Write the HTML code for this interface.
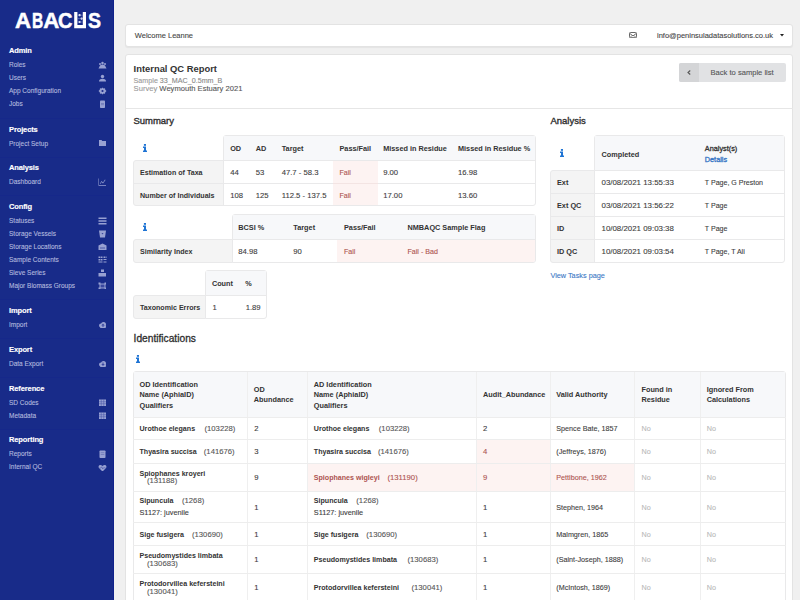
<!DOCTYPE html>
<html><head><meta charset="utf-8">
<style>
*{box-sizing:border-box;margin:0;padding:0}
html,body{width:800px;height:600px;overflow:hidden;background:#f0f0f0;font-family:"Liberation Sans",sans-serif;color:#333}
.a{position:absolute;white-space:nowrap}
.n{-webkit-text-stroke:0.1px}
.b{-webkit-text-stroke:0px}
</style></head><body>
<div class="a" style="left:0px;top:0px;width:114px;height:600px;background:#182b89;"></div>
<div class="a" style="left:113px;top:0px;width:1px;height:600px;background:#10218a;"></div>
<div class="a" style="left:15.0px;top:9.6px;font-size:22.2px;line-height:22px;font-weight:bold;color:#fff;-webkit-text-stroke:0.5px #fff;transform:scaleX(1.0);transform-origin:0 0">A</div>
<div class="a" style="left:31.8px;top:9.6px;font-size:22.2px;line-height:22px;font-weight:bold;color:#fff;-webkit-text-stroke:0.5px #fff;transform:scaleX(0.7);transform-origin:0 0">B</div>
<div class="a" style="left:43.2px;top:9.6px;font-size:22.2px;line-height:22px;font-weight:bold;color:#fff;-webkit-text-stroke:0.5px #fff;transform:scaleX(1.0);transform-origin:0 0">A</div>
<div class="a" style="left:58.4px;top:9.6px;font-size:22.2px;line-height:22px;font-weight:bold;color:#fff;-webkit-text-stroke:0.5px #fff;transform:scaleX(0.9);transform-origin:0 0">C</div>
<div class="a" style="left:87.5px;top:9.6px;font-size:22.2px;line-height:22px;font-weight:bold;color:#fff;-webkit-text-stroke:0.5px #fff;transform:scaleX(0.88);transform-origin:0 0">S</div>
<svg class="a" style="left:74px;top:12px" width="13" height="17" viewBox="0 0 13 17"><path d="M0.2 0 H3.4 V13 H8.8 V0 H12 V16.2 H0.2 Z" fill="#fff"/><circle cx="5.6" cy="3.2" r="1.1" fill="#fff"/><circle cx="7.6" cy="6.6" r="1.1" fill="#fff"/><circle cx="5.6" cy="10" r="1.1" fill="#fff"/><path d="M3.4 3.2 H8.8 M3.4 6.6 H8.8 M3.4 10 H8.8" stroke="#8f9ad0" stroke-width="0.5"/></svg>
<div class="a b" style="left:9px;top:46px;font-size:7.5px;line-height:9px;font-weight:bold;color:#fff;letter-spacing:-0.12px;-webkit-text-stroke:0.15px #fff">Admin</div>
<div class="a b" style="left:9px;top:125px;font-size:7.5px;line-height:9px;font-weight:bold;color:#fff;letter-spacing:-0.12px;-webkit-text-stroke:0.15px #fff">Projects</div>
<div class="a b" style="left:9px;top:163px;font-size:7.5px;line-height:9px;font-weight:bold;color:#fff;letter-spacing:-0.12px;-webkit-text-stroke:0.15px #fff">Analysis</div>
<div class="a b" style="left:9px;top:202px;font-size:7.5px;line-height:9px;font-weight:bold;color:#fff;letter-spacing:-0.12px;-webkit-text-stroke:0.15px #fff">Config</div>
<div class="a b" style="left:9px;top:306px;font-size:7.5px;line-height:9px;font-weight:bold;color:#fff;letter-spacing:-0.12px;-webkit-text-stroke:0.15px #fff">Import</div>
<div class="a b" style="left:9px;top:345px;font-size:7.5px;line-height:9px;font-weight:bold;color:#fff;letter-spacing:-0.12px;-webkit-text-stroke:0.15px #fff">Export</div>
<div class="a b" style="left:9px;top:384px;font-size:7.5px;line-height:9px;font-weight:bold;color:#fff;letter-spacing:-0.12px;-webkit-text-stroke:0.15px #fff">Reference</div>
<div class="a b" style="left:9px;top:435px;font-size:7.5px;line-height:9px;font-weight:bold;color:#fff;letter-spacing:-0.12px;-webkit-text-stroke:0.15px #fff">Reporting</div>
<div class="a n" style="left:9px;top:61px;font-size:6.5px;line-height:7px;font-weight:normal;color:#b3badf;">Roles</div>
<div class="a n" style="left:9px;top:74px;font-size:6.5px;line-height:7px;font-weight:normal;color:#b3badf;">Users</div>
<div class="a n" style="left:9px;top:87px;font-size:6.5px;line-height:7px;font-weight:normal;color:#b3badf;">App Configuration</div>
<div class="a n" style="left:9px;top:100px;font-size:6.5px;line-height:7px;font-weight:normal;color:#b3badf;">Jobs</div>
<div class="a n" style="left:9px;top:140px;font-size:6.5px;line-height:7px;font-weight:normal;color:#b3badf;">Project Setup</div>
<div class="a n" style="left:9px;top:178px;font-size:6.5px;line-height:7px;font-weight:normal;color:#b3badf;">Dashboard</div>
<div class="a n" style="left:9px;top:217px;font-size:6.5px;line-height:7px;font-weight:normal;color:#b3badf;">Statuses</div>
<div class="a n" style="left:9px;top:230px;font-size:6.5px;line-height:7px;font-weight:normal;color:#b3badf;">Storage Vessels</div>
<div class="a n" style="left:9px;top:243px;font-size:6.5px;line-height:7px;font-weight:normal;color:#b3badf;">Storage Locations</div>
<div class="a n" style="left:9px;top:256px;font-size:6.5px;line-height:7px;font-weight:normal;color:#b3badf;">Sample Contents</div>
<div class="a n" style="left:9px;top:269px;font-size:6.5px;line-height:7px;font-weight:normal;color:#b3badf;">Sieve Series</div>
<div class="a n" style="left:9px;top:282px;font-size:6.5px;line-height:7px;font-weight:normal;color:#b3badf;">Major Biomass Groups</div>
<div class="a n" style="left:9px;top:321px;font-size:6.5px;line-height:7px;font-weight:normal;color:#b3badf;">Import</div>
<div class="a n" style="left:9px;top:360px;font-size:6.5px;line-height:7px;font-weight:normal;color:#b3badf;">Data Export</div>
<div class="a n" style="left:9px;top:399px;font-size:6.5px;line-height:7px;font-weight:normal;color:#b3badf;">SD Codes</div>
<div class="a n" style="left:9px;top:412px;font-size:6.5px;line-height:7px;font-weight:normal;color:#b3badf;">Metadata</div>
<div class="a n" style="left:9px;top:450px;font-size:6.5px;line-height:7px;font-weight:normal;color:#b3badf;">Reports</div>
<div class="a n" style="left:9px;top:463px;font-size:6.5px;line-height:7px;font-weight:normal;color:#b3badf;">Internal QC</div>
<div class="a" style="left:0px;top:118px;width:113px;height:1px;background:#16288a;"></div>
<div class="a" style="left:0px;top:157px;width:113px;height:1px;background:#16288a;"></div>
<div class="a" style="left:0px;top:195px;width:113px;height:1px;background:#16288a;"></div>
<div class="a" style="left:0px;top:299px;width:113px;height:1px;background:#16288a;"></div>
<div class="a" style="left:0px;top:338px;width:113px;height:1px;background:#16288a;"></div>
<div class="a" style="left:0px;top:377px;width:113px;height:1px;background:#16288a;"></div>
<div class="a" style="left:0px;top:429px;width:113px;height:1px;background:#16288a;"></div>
<svg class="a" style="left:97.5px;top:60.8px" width="9" height="8" viewBox="0 0 18 16" fill="#98a1d2"><circle cx="9" cy="4" r="2.5"/><circle cx="4" cy="6" r="2"/><circle cx="14" cy="6" r="2"/><path d="M4 9 Q9 5 14 9 L17 15 H1 Z"/></svg>
<svg class="a" style="left:97.5px;top:73.5px" width="9" height="8" viewBox="0 0 18 16" fill="#98a1d2"><circle cx="9" cy="5" r="3.4"/><path d="M2 15 Q2 9.5 9 9.5 Q16 9.5 16 15 Z"/></svg>
<svg class="a" style="left:97.5px;top:86.5px" width="9" height="8" viewBox="0 0 18 16" fill="#98a1d2"><path d="M9 1 L11 3 L14 2.5 L14.5 5.5 L17 8 L14.5 10.5 L14 13.5 L11 13 L9 15 L7 13 L4 13.5 L3.5 10.5 L1 8 L3.5 5.5 L4 2.5 L7 3 Z"/><circle cx="9" cy="8" r="2.2" fill="#1b2a8a"/></svg>
<svg class="a" style="left:97.5px;top:99.6px" width="9" height="8" viewBox="0 0 18 16" fill="#98a1d2"><rect x="4" y="1" width="10" height="15" rx="1.5"/><rect x="6" y="6" width="6" height="1.2" fill="#5f6cb0"/><rect x="6" y="9" width="6" height="1.2" fill="#5f6cb0"/></svg>
<svg class="a" style="left:97.5px;top:138.5px" width="9" height="8" viewBox="0 0 18 16" fill="#98a1d2"><path d="M2 2 H7 L8.5 4 H16 V14 H2 Z"/></svg>
<svg class="a" style="left:97.5px;top:177.5px" width="9" height="8" viewBox="0 0 18 16" fill="#98a1d2"><path d="M2 1 V14 H16 V15.5 H1 V1 Z"/><path d="M4 11 L7 6 L10 9 L14 3 L15 4 L10 11 L7 8 L5 12 Z"/></svg>
<svg class="a" style="left:97.5px;top:216.5px" width="9" height="8" viewBox="0 0 18 16" fill="#98a1d2"><rect x="1" y="1" width="16" height="3"/><rect x="1" y="6.5" width="16" height="3"/><rect x="1" y="12" width="16" height="3"/></svg>
<svg class="a" style="left:97.5px;top:229.5px" width="9" height="8" viewBox="0 0 18 16" fill="#98a1d2"><path d="M2 1 H16 L14 15 H4 Z"/><path d="M7 6 H11 L9 9 Z" fill="#3a48a0"/></svg>
<svg class="a" style="left:97.5px;top:243.0px" width="9" height="7" viewBox="0 0 18 14" fill="#98a1d2"><path d="M1 5 L9 1 L17 5 V15 H1 Z"/><rect x="4" y="8" width="10" height="1" fill="#4b58a8"/><rect x="4" y="11" width="10" height="1" fill="#4b58a8"/></svg>
<svg class="a" style="left:97.5px;top:256.0px" width="9" height="7" viewBox="0 0 18 14" fill="#98a1d2"><rect x="1" y="1" width="3" height="3"/><rect x="5" y="1" width="4" height="3"/><rect x="11" y="1" width="3" height="3"/><rect x="15" y="1" width="2" height="3"/><rect x="1" y="6" width="3" height="3"/><rect x="5" y="6" width="4" height="3"/><rect x="11" y="6" width="6" height="2"/><rect x="1" y="11" width="8" height="2"/><rect x="11" y="11" width="6" height="2"/></svg>
<svg class="a" style="left:98.0px;top:268.5px" width="8" height="8" viewBox="0 0 16 16" fill="#98a1d2"><rect x="6" y="1" width="6" height="5"/><rect x="1" y="8" width="16" height="7"/></svg>
<svg class="a" style="left:98.0px;top:282.0px" width="8" height="7" viewBox="0 0 16 14" fill="#98a1d2"><path d="M1 1 H5 V3 H13 V1 H17 V5 H15 V11 H17 V15 H13 V13 H5 V15 H1 V11 H3 V5 H1 Z"/><path d="M5 5 H13 V11 H5 Z" fill="#3a48a0"/></svg>
<svg class="a" style="left:97.5px;top:321.2px" width="9" height="7" viewBox="0 0 18 14" fill="#98a1d2"><circle cx="6" cy="9" r="4"/><circle cx="11" cy="7" r="5"/><rect x="4" y="9" width="12" height="5" rx="2"/><path d="M10 5 L6.5 9 H9 V12 H11 V9 H13.5 Z" fill="#3a48a0"/></svg>
<svg class="a" style="left:97.5px;top:359.5px" width="9" height="7" viewBox="0 0 18 14" fill="#98a1d2"><circle cx="6" cy="9" r="4"/><circle cx="11" cy="7" r="5"/><rect x="4" y="9" width="12" height="5" rx="2"/><path d="M10 12 L6.5 8 H9 V5 H11 V8 H13.5 Z" fill="#3a48a0"/></svg>
<svg class="a" style="left:98.0px;top:398.7px" width="8" height="7" viewBox="0 0 16 14" fill="#98a1d2"><rect x="2" y="1" width="14" height="14"/><path d="M2 5.5 H16 M2 9.5 H16 M6.5 1 V15 M11.5 1 V15" stroke="#3a48a0" stroke-width="0.9"/></svg>
<svg class="a" style="left:98.0px;top:411.7px" width="8" height="7" viewBox="0 0 16 14" fill="#98a1d2"><rect x="2" y="1" width="14" height="14"/><path d="M2 5.5 H16 M2 9.5 H16 M6.5 1 V15 M11.5 1 V15" stroke="#3a48a0" stroke-width="0.9"/></svg>
<svg class="a" style="left:98.0px;top:450.0px" width="8" height="8" viewBox="0 0 16 16" fill="#98a1d2"><rect x="3" y="1" width="12" height="15" rx="1.5"/><rect x="5.5" y="5" width="7" height="1.2" fill="#5f6cb0"/><rect x="5.5" y="8.5" width="7" height="1.2" fill="#5f6cb0"/></svg>
<svg class="a" style="left:97.5px;top:463.5px" width="9" height="7" viewBox="0 0 18 14" fill="#98a1d2"><path d="M9 15 L2 8 Q0 5 2.5 2.5 Q5.5 0.5 9 4 Q12.5 0.5 15.5 2.5 Q18 5 16 8 Z"/><path d="M3 8 H6 L7.5 5.5 L9.5 10 L11 7.5 H15" stroke="#3a48a0" stroke-width="1" fill="none"/></svg>
<div class="a" style="left:125px;top:24px;width:668px;height:23px;background:#fff;border:1px solid #e3e3e3;border-radius:3px;box-shadow:0 1px 1px rgba(0,0,0,0.05)"></div>
<svg class="a" style="left:629px;top:32px" width="8" height="6.2" viewBox="0 0 16 12.4"><rect x="1" y="1" width="14" height="10.4" rx="1.8" fill="none" stroke="#666" stroke-width="2"/><path d="M1.5 2.8 L8 8 L14.5 2.8" fill="none" stroke="#666" stroke-width="2"/><path d="M2 11 L6 7 M14 11 L10 7" stroke="#666" stroke-width="1.6"/></svg>
<svg class="a" style="left:779.5px;top:33.5px" width="4" height="3" viewBox="0 0 8 6"><path d="M0 0 H8 L4 5 Z" fill="#222"/></svg>
<div class="a n" style="left:134.8px;top:31px;font-size:7.5px;line-height:9px;font-weight:normal;color:#444;">Welcome Leanne</div>
<div class="a n" style="left:657px;top:31px;font-size:7.5px;line-height:9px;font-weight:normal;color:#444;">info@peninsuladatasolutions.co.uk</div>
<div class="a" style="left:125px;top:54px;width:668px;height:567px;background:#fff;border:1px solid #e3e3e3;border-radius:3px;"></div>
<div class="a b" style="left:133.6px;top:63px;font-size:9.4px;line-height:11px;font-weight:bold;color:#333;">Internal QC Report</div>
<div class="a n" style="left:133.6px;top:77px;font-size:7.16px;line-height:8px;font-weight:normal;color:#888;"><span style="color:#999">Sample</span> <span style="color:#888">33_MAC_0.5mm_B</span></div>
<div class="a n" style="left:133.6px;top:84px;font-size:7.6px;line-height:9px;font-weight:normal;color:#555;"><span style="color:#999">Survey</span> <span style="color:#555">Weymouth Estuary 2021</span></div>
<div class="a" style="left:679px;top:63px;width:107px;height:19px;background:#e1e2e4;border-radius:2px;"></div>
<div class="a" style="left:679px;top:63px;width:20px;height:19px;background:#d4d5d7;border-radius:2px 0 0 2px;"></div>
<svg class="a" style="left:687px;top:70px" width="4" height="5" viewBox="0 0 8 10"><path d="M6.5 1 L2 5 L6.5 9" fill="none" stroke="#555" stroke-width="2.2"/></svg>
<div class="a n" style="left:710.5px;top:68px;font-size:7.59px;line-height:9px;font-weight:normal;color:#555;">Back to sample list</div>
<div class="a" style="left:126px;top:108px;width:667px;height:1px;background:#e6e6e6;"></div>
<div class="a n" style="left:133.4px;top:115px;font-size:9.5px;line-height:11px;font-weight:normal;color:#2e2e2e;-webkit-text-stroke:0.35px">Summary</div>
<div class="a n" style="left:550.4px;top:115px;font-size:9.5px;line-height:11px;font-weight:normal;color:#2e2e2e;-webkit-text-stroke:0.35px">Analysis</div>
<div class="a" style="left:133px;top:160px;width:91px;height:46px;background:#f4f4f4;border:1px solid #e9e9ea;border-radius:3px 0 0 3px;"></div>
<div class="a" style="left:223px;top:135px;width:313px;height:71px;background:#fff;border:1px solid #e9e9ea;border-radius:3px 3px 3px 0;"></div>
<div class="a" style="left:224px;top:136px;width:311px;height:25px;background:#f7f8fa;border-radius:0;"></div>
<div class="a" style="left:223px;top:160px;width:313px;height:1px;background:#e9e9ea;"></div>
<div class="a" style="left:133px;top:183px;width:403px;height:1px;background:#e9e9ea;"></div>
<div class="a" style="left:223px;top:160px;width:1px;height:46px;background:#e9e9ea;"></div>
<div class="a" style="left:333px;top:161px;width:45px;height:44px;background:#fdf3f2;border-radius:0;"></div>
<div class="a" style="left:333px;top:183px;width:45px;height:1px;background:#f3e4e3;"></div>
<svg class="a" style="left:142.5px;top:143.8px" width="4" height="8" viewBox="0 0 4 8"><rect x="0.9" y="0" width="2.1" height="1.8" fill="#1f74d4"/><path d="M0 2.6 H3 V6.6 H4 V8 H0 V6.6 H1 V4 H0 Z" fill="#1f74d4"/></svg>
<div class="a b" style="left:230.2px;top:144px;font-size:7.3px;line-height:9px;font-weight:bold;color:#333;">OD</div>
<div class="a b" style="left:255.8px;top:144px;font-size:7.3px;line-height:9px;font-weight:bold;color:#333;">AD</div>
<div class="a b" style="left:281.7px;top:144px;font-size:7.3px;line-height:9px;font-weight:bold;color:#333;">Target</div>
<div class="a b" style="left:339.5px;top:144px;font-size:7.3px;line-height:9px;font-weight:bold;color:#333;">Pass/Fail</div>
<div class="a b" style="left:383.2px;top:144px;font-size:7.3px;line-height:9px;font-weight:bold;color:#333;">Missed in Residue</div>
<div class="a b" style="left:458px;top:144px;font-size:7.3px;line-height:9px;font-weight:bold;color:#333;">Missed in Residue %</div>
<div class="a b" style="left:140px;top:169px;font-size:7.1px;line-height:8px;font-weight:bold;color:#333;">Estimation of Taxa</div>
<div class="a b" style="left:140px;top:192px;font-size:7.1px;line-height:8px;font-weight:bold;color:#333;">Number of Individuals</div>
<div class="a n" style="left:230.2px;top:168px;font-size:7.7px;line-height:9px;font-weight:normal;color:#3d3d3d;">44</div>
<div class="a n" style="left:255.8px;top:168px;font-size:7.7px;line-height:9px;font-weight:normal;color:#3d3d3d;">53</div>
<div class="a n" style="left:281.7px;top:168px;font-size:7.7px;line-height:9px;font-weight:normal;color:#3d3d3d;">47.7 - 58.3</div>
<div class="a n" style="left:339.5px;top:169px;font-size:7.1px;line-height:8px;font-weight:normal;color:#ad5450;">Fail</div>
<div class="a n" style="left:383.2px;top:168px;font-size:7.7px;line-height:9px;font-weight:normal;color:#3d3d3d;">9.00</div>
<div class="a n" style="left:458px;top:168px;font-size:7.7px;line-height:9px;font-weight:normal;color:#3d3d3d;">16.98</div>
<div class="a n" style="left:230.2px;top:191px;font-size:7.7px;line-height:9px;font-weight:normal;color:#3d3d3d;">108</div>
<div class="a n" style="left:255.8px;top:191px;font-size:7.7px;line-height:9px;font-weight:normal;color:#3d3d3d;">125</div>
<div class="a n" style="left:281.7px;top:191px;font-size:7.7px;line-height:9px;font-weight:normal;color:#3d3d3d;">112.5 - 137.5</div>
<div class="a n" style="left:339.5px;top:192px;font-size:7.1px;line-height:8px;font-weight:normal;color:#ad5450;">Fail</div>
<div class="a n" style="left:383.2px;top:191px;font-size:7.7px;line-height:9px;font-weight:normal;color:#3d3d3d;">17.00</div>
<div class="a n" style="left:458px;top:191px;font-size:7.7px;line-height:9px;font-weight:normal;color:#3d3d3d;">13.60</div>
<div class="a" style="left:133px;top:239px;width:100px;height:24px;background:#f4f4f4;border:1px solid #e9e9ea;border-radius:3px 0 0 3px;"></div>
<div class="a" style="left:232px;top:214px;width:304px;height:49px;background:#fff;border:1px solid #e9e9ea;border-radius:3px 3px 3px 0;"></div>
<div class="a" style="left:233px;top:215px;width:302px;height:25px;background:#f7f8fa;border-radius:0;"></div>
<div class="a" style="left:232px;top:239px;width:304px;height:1px;background:#e9e9ea;"></div>
<div class="a" style="left:337px;top:240px;width:198px;height:22px;background:#fdf3f2;border-radius:0 0 2px 0;"></div>
<svg class="a" style="left:142.5px;top:223.2px" width="4" height="8" viewBox="0 0 4 8"><rect x="0.9" y="0" width="2.1" height="1.8" fill="#1f74d4"/><path d="M0 2.6 H3 V6.6 H4 V8 H0 V6.6 H1 V4 H0 Z" fill="#1f74d4"/></svg>
<div class="a b" style="left:238.3px;top:223px;font-size:7.3px;line-height:9px;font-weight:bold;color:#333;">BCSI %</div>
<div class="a b" style="left:293.3px;top:223px;font-size:7.3px;line-height:9px;font-weight:bold;color:#333;">Target</div>
<div class="a b" style="left:344px;top:223px;font-size:7.3px;line-height:9px;font-weight:bold;color:#333;">Pass/Fail</div>
<div class="a b" style="left:407.5px;top:223px;font-size:7.3px;line-height:9px;font-weight:bold;color:#333;">NMBAQC Sample Flag</div>
<div class="a b" style="left:140px;top:248px;font-size:7.1px;line-height:8px;font-weight:bold;color:#333;">Similarity Index</div>
<div class="a n" style="left:238.3px;top:247px;font-size:7.7px;line-height:9px;font-weight:normal;color:#3d3d3d;">84.98</div>
<div class="a n" style="left:293.3px;top:247px;font-size:7.7px;line-height:9px;font-weight:normal;color:#3d3d3d;">90</div>
<div class="a n" style="left:344px;top:248px;font-size:7.1px;line-height:8px;font-weight:normal;color:#ad5450;">Fail</div>
<div class="a n" style="left:407.5px;top:248px;font-size:7.1px;line-height:8px;font-weight:normal;color:#ad5450;">Fail - Bad</div>
<div class="a" style="left:133px;top:295px;width:73px;height:24px;background:#f4f4f4;border:1px solid #e9e9ea;border-radius:3px 0 0 3px;"></div>
<div class="a" style="left:205px;top:270px;width:62px;height:49px;background:#fff;border:1px solid #e9e9ea;border-radius:3px 3px 3px 0;"></div>
<div class="a" style="left:206px;top:271px;width:60px;height:24px;background:#f7f8fa;border-radius:0;"></div>
<div class="a" style="left:205px;top:295px;width:62px;height:1px;background:#e9e9ea;"></div>
<div class="a b" style="left:211.9px;top:279px;font-size:7.3px;line-height:9px;font-weight:bold;color:#333;">Count</div>
<div class="a b" style="left:245.2px;top:279px;font-size:7.3px;line-height:9px;font-weight:bold;color:#333;">%</div>
<div class="a b" style="left:140px;top:304px;font-size:7.1px;line-height:8px;font-weight:bold;color:#333;">Taxonomic Errors</div>
<div class="a n" style="left:212.5px;top:303px;font-size:7.7px;line-height:9px;font-weight:normal;color:#3d3d3d;">1</div>
<div class="a n" style="left:245.7px;top:303px;font-size:7.7px;line-height:9px;font-weight:normal;color:#3d3d3d;">1.89</div>
<div class="a" style="left:550px;top:170px;width:45px;height:93px;background:#f4f4f4;border:1px solid #e9e9ea;border-radius:3px 0 0 3px;"></div>
<div class="a" style="left:594px;top:135px;width:191px;height:128px;background:#fff;border:1px solid #e9e9ea;border-radius:3px 3px 3px 0;"></div>
<div class="a" style="left:595px;top:136px;width:189px;height:35px;background:#f7f8fa;border-radius:0;"></div>
<div class="a" style="left:594px;top:170px;width:191px;height:1px;background:#e9e9ea;"></div>
<div class="a" style="left:550px;top:193px;width:235px;height:1px;background:#e9e9ea;"></div>
<div class="a" style="left:550px;top:216px;width:235px;height:1px;background:#e9e9ea;"></div>
<div class="a" style="left:550px;top:239px;width:235px;height:1px;background:#e9e9ea;"></div>
<div class="a" style="left:594px;top:170px;width:1px;height:93px;background:#e9e9ea;"></div>
<svg class="a" style="left:559.5px;top:149px" width="4" height="8" viewBox="0 0 4 8"><rect x="0.9" y="0" width="2.1" height="1.8" fill="#1f74d4"/><path d="M0 2.6 H3 V6.6 H4 V8 H0 V6.6 H1 V4 H0 Z" fill="#1f74d4"/></svg>
<div class="a b" style="left:601.5px;top:150px;font-size:7.3px;line-height:9px;font-weight:bold;color:#333;">Completed</div>
<div class="a n" style="left:704.8px;top:144px;font-size:7.3px;line-height:9px;font-weight:normal;color:#333;-webkit-text-stroke:0.3px">Analyst(s)</div>
<div class="a n" style="left:704.8px;top:155px;font-size:7.3px;line-height:9px;font-weight:normal;color:#3b78c6;-webkit-text-stroke:0.35px">Details</div>
<div class="a b" style="left:557px;top:178px;font-size:7.3px;line-height:9px;font-weight:bold;color:#333;">Ext</div>
<div class="a n" style="left:601.5px;top:178px;font-size:7.9px;line-height:9px;font-weight:normal;color:#3d3d3d;">03/08/2021 13:55:33</div>
<div class="a n" style="left:704.8px;top:179px;font-size:7.05px;line-height:7px;font-weight:normal;color:#3d3d3d;">T Page, G Preston</div>
<div class="a b" style="left:557px;top:201px;font-size:7.3px;line-height:9px;font-weight:bold;color:#333;">Ext QC</div>
<div class="a n" style="left:601.5px;top:201px;font-size:7.9px;line-height:9px;font-weight:normal;color:#3d3d3d;">03/08/2021 13:56:22</div>
<div class="a n" style="left:704.8px;top:202px;font-size:7.05px;line-height:7px;font-weight:normal;color:#3d3d3d;">T Page</div>
<div class="a b" style="left:557px;top:224px;font-size:7.3px;line-height:9px;font-weight:bold;color:#333;">ID</div>
<div class="a n" style="left:601.5px;top:224px;font-size:7.9px;line-height:9px;font-weight:normal;color:#3d3d3d;">10/08/2021 09:03:38</div>
<div class="a n" style="left:704.8px;top:225px;font-size:7.05px;line-height:7px;font-weight:normal;color:#3d3d3d;">T Page</div>
<div class="a b" style="left:557px;top:247px;font-size:7.3px;line-height:9px;font-weight:bold;color:#333;">ID QC</div>
<div class="a n" style="left:601.5px;top:247px;font-size:7.9px;line-height:9px;font-weight:normal;color:#3d3d3d;">10/08/2021 09:03:54</div>
<div class="a n" style="left:704.8px;top:248px;font-size:7.05px;line-height:7px;font-weight:normal;color:#3d3d3d;">T Page, T Ali</div>
<div class="a n" style="left:550.4px;top:271px;font-size:7.3px;line-height:9px;font-weight:normal;color:#3b78c6;">View Tasks page</div>
<div class="a n" style="left:133.6px;top:333px;font-size:10.2px;line-height:11px;font-weight:normal;color:#2e2e2e;-webkit-text-stroke:0.3px">Identifications</div>
<svg class="a" style="left:136px;top:355px" width="4" height="8" viewBox="0 0 4 8"><rect x="0.9" y="0" width="2.1" height="1.8" fill="#1f74d4"/><path d="M0 2.6 H3 V6.6 H4 V8 H0 V6.6 H1 V4 H0 Z" fill="#1f74d4"/></svg>
<div class="a" style="left:133px;top:371px;width:653px;height:270px;background:#fff;border:1px solid #e9e9ea;border-radius:3px;"></div>
<div class="a" style="left:134px;top:372px;width:651px;height:46px;background:#f7f8fa;border-radius:0;"></div>
<div class="a" style="left:477px;top:440px;width:73px;height:23px;background:#fdf3f2;border-radius:0;"></div>
<div class="a" style="left:308px;top:464px;width:326px;height:27px;background:#fdf3f2;border-radius:0;"></div>
<div class="a" style="left:247px;top:372px;width:1px;height:229px;background:#efefef;"></div>
<div class="a" style="left:307px;top:372px;width:1px;height:229px;background:#efefef;"></div>
<div class="a" style="left:476px;top:372px;width:1px;height:229px;background:#efefef;"></div>
<div class="a" style="left:550px;top:372px;width:1px;height:229px;background:#efefef;"></div>
<div class="a" style="left:634px;top:372px;width:1px;height:229px;background:#efefef;"></div>
<div class="a" style="left:700px;top:372px;width:1px;height:229px;background:#efefef;"></div>
<div class="a" style="left:133px;top:417px;width:653px;height:1px;background:#ededed;"></div>
<div class="a" style="left:133px;top:439px;width:653px;height:1px;background:#ededed;"></div>
<div class="a" style="left:133px;top:463px;width:653px;height:1px;background:#ededed;"></div>
<div class="a" style="left:133px;top:491px;width:653px;height:1px;background:#ededed;"></div>
<div class="a" style="left:133px;top:522px;width:653px;height:1px;background:#ededed;"></div>
<div class="a" style="left:133px;top:545px;width:653px;height:1px;background:#ededed;"></div>
<div class="a" style="left:133px;top:573px;width:653px;height:1px;background:#ededed;"></div>
<div class="a b" style="left:139.5px;top:380px;font-size:7.3px;line-height:9px;font-weight:bold;color:#333;">OD Identification</div>
<div class="a b" style="left:139.5px;top:390px;font-size:7.3px;line-height:9px;font-weight:bold;color:#333;">Name (AphiaID)</div>
<div class="a b" style="left:139.5px;top:401px;font-size:7.3px;line-height:9px;font-weight:bold;color:#333;">Qualifiers</div>
<div class="a b" style="left:253.8px;top:385px;font-size:7.3px;line-height:9px;font-weight:bold;color:#333;">OD</div>
<div class="a b" style="left:253.8px;top:395px;font-size:7.3px;line-height:9px;font-weight:bold;color:#333;">Abundance</div>
<div class="a b" style="left:313.8px;top:380px;font-size:7.3px;line-height:9px;font-weight:bold;color:#333;">AD Identification</div>
<div class="a b" style="left:313.8px;top:390px;font-size:7.3px;line-height:9px;font-weight:bold;color:#333;">Name (AphiaID)</div>
<div class="a b" style="left:313.8px;top:401px;font-size:7.3px;line-height:9px;font-weight:bold;color:#333;">Qualifiers</div>
<div class="a b" style="left:483px;top:390px;font-size:7.3px;line-height:9px;font-weight:bold;color:#333;">Audit_Abundance</div>
<div class="a b" style="left:556.3px;top:390px;font-size:7.3px;line-height:9px;font-weight:bold;color:#333;">Valid Authority</div>
<div class="a b" style="left:641.5px;top:385px;font-size:7.3px;line-height:9px;font-weight:bold;color:#333;">Found in</div>
<div class="a b" style="left:641.5px;top:395px;font-size:7.3px;line-height:9px;font-weight:bold;color:#333;">Residue</div>
<div class="a b" style="left:706.7px;top:385px;font-size:7.3px;line-height:9px;font-weight:bold;color:#333;">Ignored From</div>
<div class="a b" style="left:706.7px;top:395px;font-size:7.3px;line-height:9px;font-weight:bold;color:#333;">Calculations</div>
<div class="a b" style="left:139.5px;top:425px;font-size:7.1px;line-height:8px;font-weight:bold;color:#333;">Urothoe elegans</div>
<div class="a n" style="left:204.5px;top:424px;font-size:7.7px;line-height:9px;font-weight:normal;color:#555;">(103228)</div>
<div class="a n" style="left:254.2px;top:424px;font-size:7.7px;line-height:9px;font-weight:normal;color:#3d3d3d;">2</div>
<div class="a b" style="left:313.8px;top:425px;font-size:7.1px;line-height:8px;font-weight:bold;color:#333;">Urothoe elegans</div>
<div class="a n" style="left:378.8px;top:424px;font-size:7.7px;line-height:9px;font-weight:normal;color:#555;">(103228)</div>
<div class="a n" style="left:483px;top:424px;font-size:7.7px;line-height:9px;font-weight:normal;color:#3d3d3d;">2</div>
<div class="a n" style="left:556.3px;top:424px;font-size:7.2px;line-height:9px;font-weight:normal;color:#3d3d3d;">Spence Bate, 1857</div>
<div class="a n" style="left:641.5px;top:424px;font-size:7.2px;line-height:9px;font-weight:normal;color:#b9b9b9;">No</div>
<div class="a n" style="left:706.7px;top:424px;font-size:7.2px;line-height:9px;font-weight:normal;color:#b9b9b9;">No</div>
<div class="a b" style="left:139.5px;top:448px;font-size:7.1px;line-height:8px;font-weight:bold;color:#333;">Thyasira succisa</div>
<div class="a n" style="left:203.8px;top:447px;font-size:7.7px;line-height:9px;font-weight:normal;color:#555;">(141676)</div>
<div class="a n" style="left:254.2px;top:447px;font-size:7.7px;line-height:9px;font-weight:normal;color:#3d3d3d;">3</div>
<div class="a b" style="left:313.8px;top:448px;font-size:7.1px;line-height:8px;font-weight:bold;color:#333;">Thyasira succisa</div>
<div class="a n" style="left:378px;top:447px;font-size:7.7px;line-height:9px;font-weight:normal;color:#555;">(141676)</div>
<div class="a n" style="left:483px;top:447px;font-size:7.7px;line-height:9px;font-weight:normal;color:#ad5450;">4</div>
<div class="a n" style="left:556.3px;top:447px;font-size:7.2px;line-height:9px;font-weight:normal;color:#3d3d3d;">(Jeffreys, 1876)</div>
<div class="a n" style="left:641.5px;top:447px;font-size:7.2px;line-height:9px;font-weight:normal;color:#b9b9b9;">No</div>
<div class="a n" style="left:706.7px;top:447px;font-size:7.2px;line-height:9px;font-weight:normal;color:#b9b9b9;">No</div>
<div class="a b" style="left:139.5px;top:470px;font-size:7.1px;line-height:8px;font-weight:bold;color:#333;">Spiophanes kroyeri</div>
<div class="a n" style="left:147px;top:476px;font-size:7.7px;line-height:9px;font-weight:normal;color:#555;">(131188)</div>
<div class="a n" style="left:254.2px;top:473px;font-size:7.7px;line-height:9px;font-weight:normal;color:#3d3d3d;">9</div>
<div class="a b" style="left:313.8px;top:474px;font-size:7.1px;line-height:8px;font-weight:bold;color:#ad5450;">Spiophanes wigleyi</div>
<div class="a n" style="left:387.5px;top:473px;font-size:7.7px;line-height:9px;font-weight:normal;color:#ad5450;">(131190)</div>
<div class="a n" style="left:483px;top:473px;font-size:7.7px;line-height:9px;font-weight:normal;color:#ad5450;">9</div>
<div class="a n" style="left:556.3px;top:473px;font-size:7.2px;line-height:9px;font-weight:normal;color:#ad5450;">Pettibone, 1962</div>
<div class="a n" style="left:641.5px;top:473px;font-size:7.2px;line-height:9px;font-weight:normal;color:#b9b9b9;">No</div>
<div class="a n" style="left:706.7px;top:473px;font-size:7.2px;line-height:9px;font-weight:normal;color:#b9b9b9;">No</div>
<div class="a b" style="left:139.5px;top:497px;font-size:7.1px;line-height:8px;font-weight:bold;color:#333;">Sipuncula</div>
<div class="a n" style="left:182px;top:496px;font-size:7.7px;line-height:9px;font-weight:normal;color:#555;">(1268)</div>
<div class="a n" style="left:139.5px;top:508px;font-size:7.3px;line-height:9px;font-weight:normal;color:#3d3d3d;">S1127: juvenile</div>
<div class="a n" style="left:254.2px;top:503px;font-size:7.7px;line-height:9px;font-weight:normal;color:#3d3d3d;">1</div>
<div class="a b" style="left:313.8px;top:497px;font-size:7.1px;line-height:8px;font-weight:bold;color:#333;">Sipuncula</div>
<div class="a n" style="left:356.3px;top:496px;font-size:7.7px;line-height:9px;font-weight:normal;color:#555;">(1268)</div>
<div class="a n" style="left:313.8px;top:508px;font-size:7.3px;line-height:9px;font-weight:normal;color:#3d3d3d;">S1127: juvenile</div>
<div class="a n" style="left:483px;top:503px;font-size:7.7px;line-height:9px;font-weight:normal;color:#3d3d3d;">1</div>
<div class="a n" style="left:556.3px;top:503px;font-size:7.2px;line-height:9px;font-weight:normal;color:#3d3d3d;">Stephen, 1964</div>
<div class="a n" style="left:641.5px;top:503px;font-size:7.2px;line-height:9px;font-weight:normal;color:#b9b9b9;">No</div>
<div class="a n" style="left:706.7px;top:503px;font-size:7.2px;line-height:9px;font-weight:normal;color:#b9b9b9;">No</div>
<div class="a b" style="left:139.5px;top:531px;font-size:7.1px;line-height:8px;font-weight:bold;color:#333;">Sige fusigera</div>
<div class="a n" style="left:192px;top:530px;font-size:7.7px;line-height:9px;font-weight:normal;color:#555;">(130690)</div>
<div class="a n" style="left:254.2px;top:530px;font-size:7.7px;line-height:9px;font-weight:normal;color:#3d3d3d;">1</div>
<div class="a b" style="left:313.8px;top:531px;font-size:7.1px;line-height:8px;font-weight:bold;color:#333;">Sige fusigera</div>
<div class="a n" style="left:366.3px;top:530px;font-size:7.7px;line-height:9px;font-weight:normal;color:#555;">(130690)</div>
<div class="a n" style="left:483px;top:530px;font-size:7.7px;line-height:9px;font-weight:normal;color:#3d3d3d;">1</div>
<div class="a n" style="left:556.3px;top:530px;font-size:7.2px;line-height:9px;font-weight:normal;color:#3d3d3d;">Malmgren, 1865</div>
<div class="a n" style="left:641.5px;top:530px;font-size:7.2px;line-height:9px;font-weight:normal;color:#b9b9b9;">No</div>
<div class="a n" style="left:706.7px;top:530px;font-size:7.2px;line-height:9px;font-weight:normal;color:#b9b9b9;">No</div>
<div class="a b" style="left:139.5px;top:552px;font-size:7.1px;line-height:8px;font-weight:bold;color:#333;">Pseudomystides limbata</div>
<div class="a n" style="left:147px;top:559px;font-size:7.7px;line-height:9px;font-weight:normal;color:#555;">(130683)</div>
<div class="a n" style="left:254.2px;top:555px;font-size:7.7px;line-height:9px;font-weight:normal;color:#3d3d3d;">1</div>
<div class="a b" style="left:313.8px;top:556px;font-size:7.1px;line-height:8px;font-weight:bold;color:#333;">Pseudomystides limbata</div>
<div class="a n" style="left:407.5px;top:555px;font-size:7.7px;line-height:9px;font-weight:normal;color:#555;">(130683)</div>
<div class="a n" style="left:483px;top:555px;font-size:7.7px;line-height:9px;font-weight:normal;color:#3d3d3d;">1</div>
<div class="a n" style="left:556.3px;top:555px;font-size:7.2px;line-height:9px;font-weight:normal;color:#3d3d3d;">(Saint-Joseph, 1888)</div>
<div class="a n" style="left:641.5px;top:555px;font-size:7.2px;line-height:9px;font-weight:normal;color:#b9b9b9;">No</div>
<div class="a n" style="left:706.7px;top:555px;font-size:7.2px;line-height:9px;font-weight:normal;color:#b9b9b9;">No</div>
<div class="a b" style="left:139.5px;top:580px;font-size:7.1px;line-height:8px;font-weight:bold;color:#333;">Protodorvillea kefersteini</div>
<div class="a n" style="left:147px;top:587px;font-size:7.7px;line-height:9px;font-weight:normal;color:#555;">(130041)</div>
<div class="a n" style="left:254.2px;top:583px;font-size:7.7px;line-height:9px;font-weight:normal;color:#3d3d3d;">1</div>
<div class="a b" style="left:313.8px;top:584px;font-size:7.1px;line-height:8px;font-weight:bold;color:#333;">Protodorvillea kefersteini</div>
<div class="a n" style="left:411.5px;top:583px;font-size:7.7px;line-height:9px;font-weight:normal;color:#555;">(130041)</div>
<div class="a n" style="left:483px;top:583px;font-size:7.7px;line-height:9px;font-weight:normal;color:#3d3d3d;">1</div>
<div class="a n" style="left:556.3px;top:583px;font-size:7.2px;line-height:9px;font-weight:normal;color:#3d3d3d;">(McIntosh, 1869)</div>
<div class="a n" style="left:641.5px;top:583px;font-size:7.2px;line-height:9px;font-weight:normal;color:#b9b9b9;">No</div>
<div class="a n" style="left:706.7px;top:583px;font-size:7.2px;line-height:9px;font-weight:normal;color:#b9b9b9;">No</div>
</body></html>
